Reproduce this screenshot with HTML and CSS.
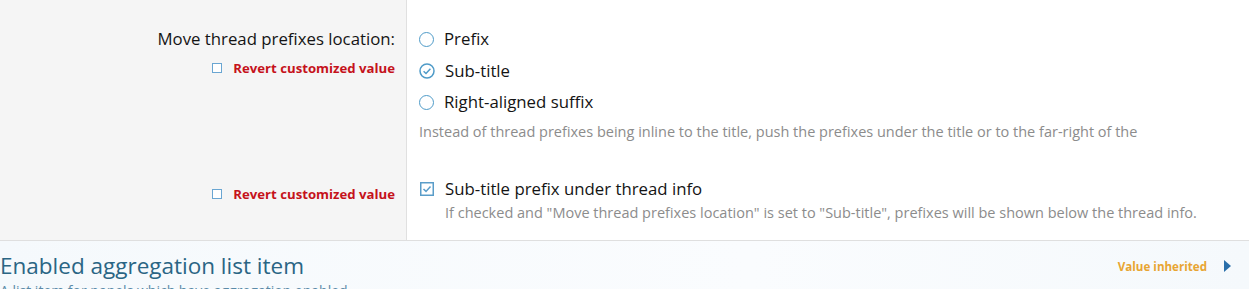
FILE: index.html
```html
<!DOCTYPE html>
<html>
<head>
<meta charset="utf-8">
<link rel="stylesheet" href="styles.css">
</head>
<body>
<div class="form">
  <div class="row row-first">
    <div class="label-col">
      <div class="label">Move thread prefixes location:</div>
      <div class="revert"><span class="sq"></span><span>Revert customized value</span></div>
    </div>
    <div class="input-col">
      <ul class="choices">
        <li class="choice"><span class="radio"></span><span>Prefix</span></li>
        <li class="choice"><span class="radio checked"><svg viewBox="0 0 16 16" width="16" height="16"><circle cx="8" cy="8" r="7" fill="none" stroke="#4f9bc8" stroke-width="1.5"/><path d="M4.6 8.2 L7 10.5 L11.4 5.8" fill="none" stroke="#4f9bc8" stroke-width="1.5"/></svg></span><span>Sub-title</span></li>
        <li class="choice"><span class="radio"></span><span>Right-aligned suffix</span></li>
      </ul>
      <div class="explain">Instead of thread prefixes being inline to the title, push the prefixes under the title or to the far-right of the</div>
    </div>
  </div>
  <div class="row row-second">
    <div class="label-col">
      <div class="revert"><span class="sq"></span><span>Revert customized value</span></div>
    </div>
    <div class="input-col">
      <div class="choice"><span class="cbox"><svg viewBox="0 0 14 14" width="14" height="14"><rect x="0.75" y="0.75" width="12.5" height="12.5" fill="#fff" stroke="#5a9dc9" stroke-width="1.5"/><path d="M3.5 7 L6 9.4 L10.5 4.6" fill="none" stroke="#5a9dc9" stroke-width="1.5"/></svg></span><span>Sub-title prefix under thread info</span></div>
      <div class="explain explain-tight">If checked and "Move thread prefixes location" is set to "Sub-title", prefixes will be shown below the thread info.</div>
    </div>
  </div>
</div>
<div class="section">
  <div class="section-head">
    <h2 class="section-title">Enabled aggregation list item</h2>
    <div class="inherited"><span>Value inherited</span><span class="arrow"></span></div>
  </div>
  <div class="section-desc">A list item for panels which have aggregation enabled.</div>
</div>
</body>
</html>
```
FILE: styles.css
```css
html, body {
  margin: 0;
  padding: 0;
  background: #fff;
}
body {
  font-family: "Open Sans", "Noto Sans", sans-serif;
  color: #141414;
  overflow: hidden;
  height: 289px;
}
.form {
  background: linear-gradient(to right, #f5f5f5 0, #f5f5f5 406px, #e0e0e0 406px, #e0e0e0 407px, #fff 407px);
  border-bottom: 1px solid #dfdfdf;
}
.row {
  display: flex;
}
.label-col {
  width: 395px;
  flex: none;
  display: flex;
  flex-direction: column;
  align-items: flex-end;
}
.input-col {
  flex: 1;
  padding-left: 24px;
}
.row-first {
  padding-top: 27px;
}
.label {
  font-size: 16.8px;
  line-height: 24px;
  color: #141414;
}
.revert {
  display: flex;
  align-items: center;
  gap: 11px;
  margin-top: 8px;
  color: #c5121b;
  font-size: 13.2px;
  font-weight: 700;
  line-height: 18px;
}
.sq {
  width: 8px;
  height: 8px;
  border: 1.5px solid #6aa6d2;
  background: #fff;
  display: inline-block;
}
.choices {
  list-style: none;
  margin: 0;
  padding: 0;
  display: flex;
  flex-direction: column;
  gap: 7.5px;
}
.choice {
  display: flex;
  align-items: center;
  gap: 10px;
  font-size: 16.8px;
  line-height: 24px;
  color: #141414;
}
.radio {
  width: 13px;
  height: 13px;
  border: 1.6px solid #4f9bc8;
  border-radius: 50%;
  display: inline-block;
  flex: none;
}
.radio.checked {
  border: none;
  width: 16px;
  height: 16px;
}
.radio svg {
  display: block;
}
.cbox {
  width: 16px;
  display: flex;
  flex: none;
  justify-content: center;
}
.cbox svg {
  display: block;
}
.explain {
  margin-top: 8px;
  font-size: 14.5px;
  line-height: 20px;
  color: #8c8c8c;
}
.row-second {
  padding-top: 35px;
  padding-bottom: 17px;
}
.explain-tight {
  margin-top: 2px;
  padding-left: 26px;
}
.section {
  background: linear-gradient(to right, #f5f9fc, #fafcfe 60%, #f5f9fc);
  padding: 10px 0 0 0;
}
.section-head {
  display: flex;
  align-items: center;
  justify-content: space-between;
}
.section-title {
  margin: 0;
  font-size: 22.5px;
  font-weight: 400;
  line-height: 30px;
  color: #2a6584;
}
.inherited {
  display: flex;
  align-items: center;
  gap: 17px;
  padding-right: 18px;
  color: #e8a532;
  font-size: 11.6px;
  font-weight: 700;
}
.arrow {
  width: 0;
  height: 0;
  border-top: 6px solid transparent;
  border-bottom: 6px solid transparent;
  border-left: 7px solid #2a6faa;
}
.section-desc {
  font-size: 14px;
  line-height: 20px;
  color: #5a8aa8;
}
```
